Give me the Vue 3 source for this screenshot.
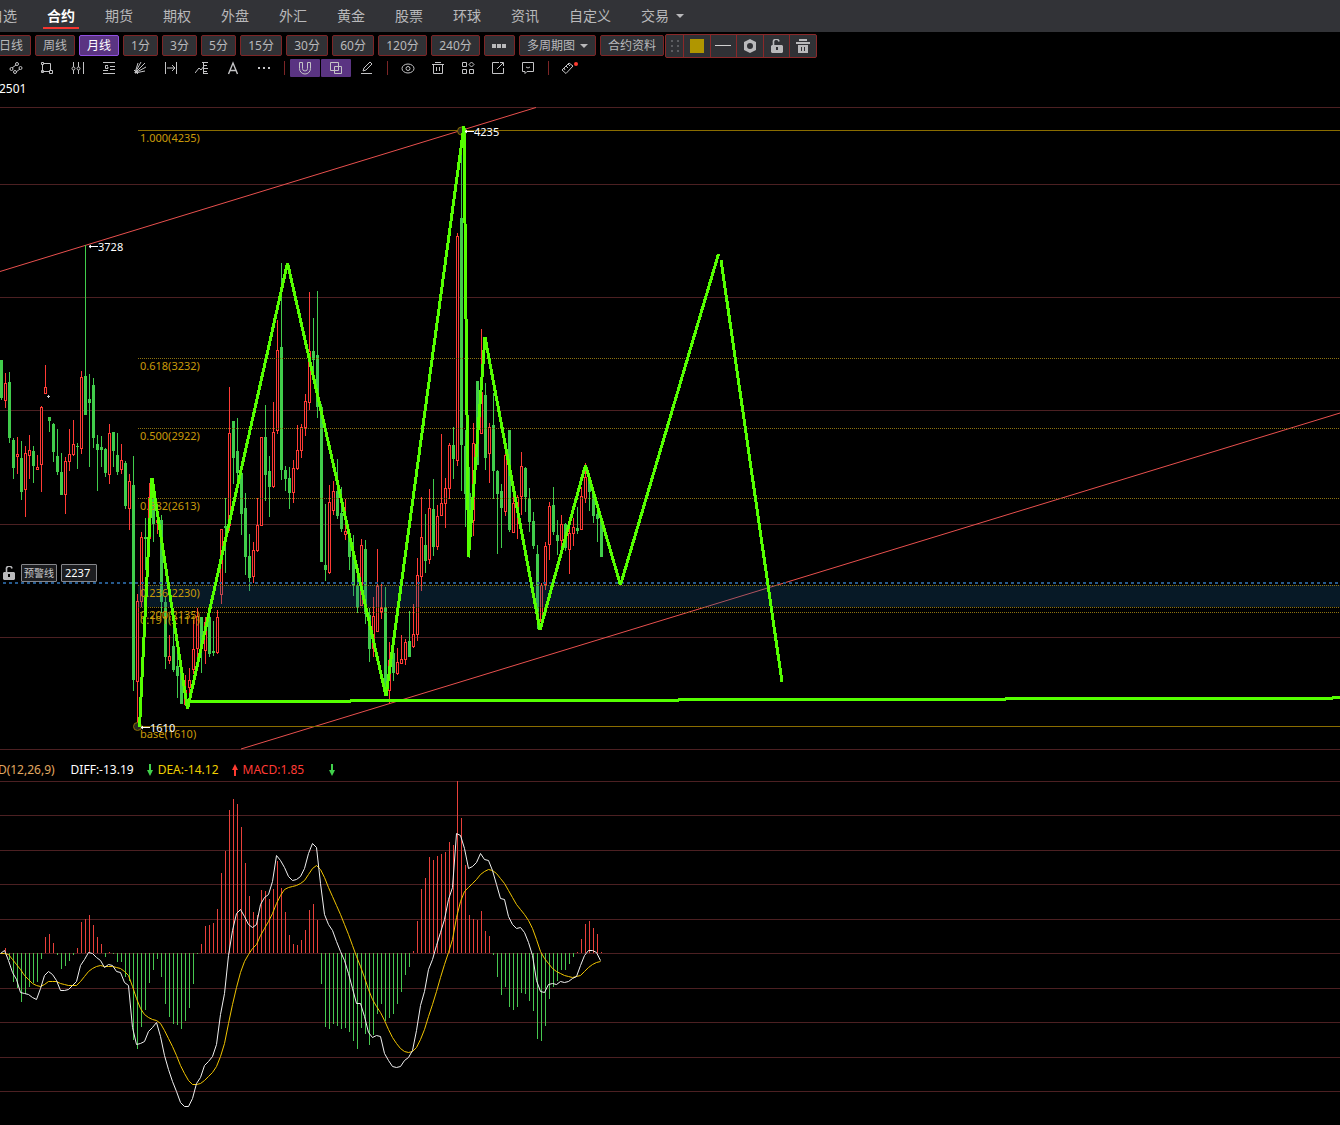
<script setup>
import { ref } from 'vue'

const menus = ['自选', '合约', '期货', '期权', '外盘', '外汇', '黄金', '股票', '环球', '资讯', '自定义']
const periods = ['日线', '周线', '月线', '1分', '3分', '5分', '15分', '30分', '60分', '120分', '240分']
const activePeriod = ref('月线')
const alertPrice = ref('2237')

// 每根K线间隔4px
const STEP = 4

// [类型, 最高, 实体上沿, 实体下沿, 最低]
const candles = [
  ['g', 360, 360, 398, 400], ['r', 373, 383, 401, 408], ['g', 372, 382, 438, 443], ['g', 438, 440, 468, 479],
  ['r', 437, 454, 457, 474], ['g', 441, 458, 492, 500], ['r', 446, 453, 490, 517], ['r', 435, 450, 456, 479],
  ['g', 446, 451, 466, 483], ['r', 455, 467, 470, 470], ['r', 406, 407, 465, 492], ['r', 365, 387, 394, 394],
  ['g', 417, 417, 421, 432], ['g', 423, 424, 452, 462], ['g', 429, 456, 472, 475], ['g', 453, 472, 495, 495],
  ['r', 457, 461, 495, 514], ['r', 429, 454, 462, 471], ['r', 420, 444, 455, 456], ['g', 443, 446, 447, 469],
  ['r', 371, 377, 449, 454], ['g', 245, 376, 415, 415], ['g', 374, 399, 403, 467], ['g', 378, 385, 438, 448],
  ['g', 435, 444, 450, 491], ['g', 436, 447, 450, 467], ['g', 448, 449, 473, 477], ['r', 424, 433, 475, 484],
  ['g', 432, 432, 451, 467], ['g', 433, 455, 472, 475], ['r', 444, 460, 470, 474], ['g', 461, 463, 506, 509],
  ['r', 474, 481, 509, 530], ['g', 456, 485, 680, 691], ['r', 594, 601, 682, 727], ['r', 532, 537, 602, 607],
  ['g', 518, 537, 539, 570], ['r', 483, 497, 539, 541], ['g', 483, 485, 524, 542], ['r', 510, 520, 523, 534],
  ['g', 515, 520, 602, 613], ['g', 597, 602, 657, 669], ['r', 635, 656, 661, 664], ['g', 620, 646, 670, 672],
  ['g', 653, 666, 676, 698], ['g', 660, 668, 704, 704], ['r', 675, 690, 705, 705], ['r', 668, 680, 688, 694],
  ['r', 620, 649, 670, 674], ['r', 608, 616, 649, 658], ['g', 617, 617, 648, 673], ['r', 617, 622, 651, 664],
  ['g', 617, 617, 654, 657], ['g', 621, 651, 653, 656], ['r', 610, 617, 653, 654], ['r', 529, 529, 595, 604],
  ['g', 498, 526, 528, 573], ['r', 387, 433, 526, 531], ['g', 421, 421, 458, 484], ['g', 418, 451, 473, 480],
  ['g', 467, 473, 514, 535], ['g', 493, 508, 557, 575], ['g', 534, 556, 578, 591], ['r', 542, 550, 577, 583],
  ['r', 498, 525, 551, 552], ['r', 437, 437, 526, 526], ['g', 405, 437, 475, 501], ['g', 456, 471, 487, 517],
  ['r', 402, 432, 487, 488], ['r', 320, 350, 431, 434], ['g', 263, 347, 470, 480], ['g', 466, 470, 479, 491],
  ['g', 467, 478, 493, 509], ['r', 460, 468, 493, 503], ['r', 425, 450, 469, 470], ['r', 424, 427, 451, 458],
  ['r', 394, 401, 428, 436], ['r', 292, 351, 403, 410], ['g', 318, 351, 360, 377], ['g', 291, 355, 407, 418],
  ['g', 404, 407, 562, 562], ['g', 504, 565, 570, 581], ['r', 485, 502, 573, 574], ['r', 481, 491, 511, 515],
  ['g', 459, 491, 516, 519], ['g', 487, 513, 529, 532], ['r', 499, 531, 535, 540], ['g', 532, 537, 557, 570],
  ['g', 535, 553, 585, 596], ['g', 575, 585, 607, 613], ['r', 539, 545, 606, 606], ['g', 540, 549, 614, 624],
  ['g', 608, 615, 649, 662], ['r', 597, 616, 649, 657], ['r', 549, 586, 632, 632], ['r', 583, 608, 612, 619],
  ['g', 587, 608, 690, 696], ['r', 642, 660, 691, 704], ['g', 650, 653, 673, 681], ['r', 648, 662, 674, 675],
  ['r', 635, 659, 664, 664], ['r', 639, 642, 660, 665], ['g', 611, 641, 657, 657], ['r', 604, 634, 647, 648],
  ['r', 558, 575, 635, 641], ['r', 497, 537, 577, 591], ['g', 514, 545, 561, 573], ['r', 489, 508, 560, 564],
  ['g', 479, 509, 547, 556], ['r', 505, 516, 547, 550], ['r', 434, 503, 516, 516], ['r', 478, 488, 504, 528],
  ['r', 443, 445, 489, 499], ['g', 427, 445, 459, 479], ['r', 233, 236, 461, 466], ['g', 130, 218, 445, 491],
  ['g', 430, 446, 494, 527], ['g', 467, 493, 513, 558], ['r', 423, 443, 521, 536], ['g', 381, 381, 465, 465],
  ['r', 329, 392, 434, 434], ['g', 383, 395, 458, 470], ['r', 423, 427, 454, 483], ['g', 393, 425, 471, 499],
  ['g', 470, 471, 494, 554], ['g', 484, 491, 508, 548], ['r', 452, 455, 512, 516], ['g', 430, 430, 530, 532],
  ['r', 497, 503, 533, 533], ['r', 495, 497, 513, 539], ['r', 452, 466, 497, 515], ['g', 467, 468, 497, 512],
  ['g', 488, 498, 522, 532], ['g', 512, 521, 546, 549], ['g', 545, 554, 620, 629], ['r', 583, 585, 622, 624],
  ['r', 542, 546, 585, 590], ['r', 502, 506, 545, 560], ['g', 487, 505, 532, 535], ['g', 520, 535, 541, 555],
  ['r', 515, 524, 541, 547], ['g', 523, 524, 548, 551], ['r', 517, 533, 550, 574], ['r', 518, 527, 534, 546],
  ['g', 507, 528, 531, 534], ['r', 487, 496, 530, 530], ['r', 463, 477, 499, 503], ['g', 476, 478, 492, 511],
  ['g', 487, 491, 516, 523], ['g', 510, 514, 519, 542], ['g', 518, 520, 557, 557]
]

// 柱状图端点
const ZERO = 953
const bars = [
  953, 948, 960, 982, 988, 1002, 994, 987, 983, 982, 959, 937, 934, 943, 955, 969, 966, 961, 955, 948,
  922, 919, 915, 925, 937, 944, 957, 952, 954, 962, 962, 977, 981, 1040, 1049, 1027, 1010, 983, 970, 959,
  977, 1004, 1017, 1024, 1025, 1029, 1021, 1008, 984, 954, 944, 926, 925, 923, 909, 873, 851, 810, 799, 804,
  827, 863, 896, 912, 915, 890, 891, 899, 889, 861, 888, 912, 935, 944, 945, 940, 930, 910, 904, 920,
  984, 1027, 1029, 1024, 1026, 1029, 1028, 1032, 1041, 1049, 1028, 1034, 1045, 1035, 1014, 1004, 1021, 1018, 1014, 1004,
  992, 975, 967, 951, 921, 889, 878, 857, 860, 856, 854, 852, 842, 845, 781, 818, 865, 915, 919, 920,
  911, 931, 936, 955, 977, 995, 987, 1007, 1010, 1007, 993, 994, 1001, 1011, 1039, 1041, 1026, 999, 987, 981,
  970, 970, 964, 957, 952, 939, 924, 921, 928, 934, 952
]
const diff = [
  953, 950, 960, 972, 979, 992, 993, 994, 997, 999, 988, 975, 971, 974, 980, 990, 990, 989, 985, 981,
  965, 959, 952, 953, 957, 960, 967, 964, 965, 971, 972, 982, 985, 1027, 1044, 1043, 1041, 1031, 1027, 1022,
  1036, 1055, 1069, 1081, 1091, 1102, 1106, 1106, 1098, 1083, 1077, 1065, 1061, 1056, 1044, 1014, 993, 955, 930, 913,
  909, 916, 924, 927, 924, 904, 897, 894, 881, 855, 860, 867, 876, 880, 879, 876, 868, 853, 843, 847,
  883, 914, 924, 930, 941, 951, 960, 973, 988, 1003, 1003, 1016, 1032, 1037, 1035, 1036, 1053, 1060, 1066, 1067,
  1066, 1060, 1057, 1050, 1030, 1005, 991, 969, 959, 945, 932, 919, 899, 887, 833, 835, 848, 868, 866, 862,
  853, 859, 860, 870, 884, 898, 899, 916, 924, 928, 927, 932, 942, 955, 980, 991, 992, 984, 983, 984,
  981, 982, 981, 978, 976, 965, 955, 950, 950, 952, 960
]
const dea = [
  953, 953, 954, 959, 964, 969, 975, 979, 983, 985, 986, 984, 981, 981, 981, 983, 984, 985, 985, 985,
  981, 976, 971, 968, 966, 965, 966, 966, 966, 967, 968, 971, 975, 986, 998, 1008, 1014, 1017, 1019, 1020,
  1023, 1030, 1038, 1046, 1055, 1065, 1073, 1080, 1084, 1084, 1083, 1080, 1076, 1072, 1066, 1056, 1043, 1023, 1004, 987,
  972, 961, 954, 948, 944, 935, 928, 921, 913, 903, 895, 889, 887, 886, 885, 883, 880, 874, 868, 865,
  869, 877, 887, 896, 905, 914, 924, 934, 945, 956, 966, 977, 989, 999, 1006, 1012, 1020, 1029, 1037, 1043,
  1048, 1051, 1052, 1051, 1047, 1039, 1029, 1016, 1004, 991, 977, 964, 952, 939, 917, 901, 891, 887, 883, 879,
  874, 871, 869, 870, 873, 878, 883, 890, 897, 904, 909, 914, 920, 928, 939, 951, 958, 963, 968, 971,
  973, 975, 976, 977, 976, 975, 971, 967, 964, 962, 961
]
const toPoints = (list) => list.map((y, i) => `${i * STEP + 0.5},${y + 0.5}`).join(' ')

const priceGrid = [107, 184, 297, 410, 524, 637, 749]
const macdGrid = [781, 815, 850, 884, 919, 953, 988, 1022, 1057, 1091]

const fibLines = [358, 428, 498, 585, 607, 612]
const fibLabels = [
  { y: 142, text: '1.000(4235)' },
  { y: 370, text: '0.618(3232)' },
  { y: 440, text: '0.500(2922)' },
  { y: 510, text: '0.382(2613)' },
  { y: 597, text: '0.236(2230)' },
  { y: 619, text: '0.200(2135)' },
  { y: 624, text: '0.191(2111)' },
  { y: 738, text: 'base(1610)' }
]
const marks = [
  { x: 88, y: 247, text: '3728' },
  { x: 464, y: 132, text: '4235' },
  { x: 140, y: 728, text: '1610' }
]
</script>

<template>
  <div class="app">
    <nav class="menu">
      <a
        v-for="item in menus"
        :key="item"
        href="#"
        class="menu-item"
        :class="{ active: item === '合约' }"
      >{{ item }}</a>
      <a href="#" class="menu-item">交易<i class="caret"></i></a>
    </nav>

    <div class="period-bar">
      <button
        v-for="item in periods"
        :key="item"
        class="period"
        :class="[`len-${item.length}`, { active: item === activePeriod }]"
        @click="activePeriod = item"
      >{{ item }}</button>
      <button class="period" aria-label="更多周期">
        <svg width="15" height="4"><path d="M0 0h4v4H0zM5 0h4v4H5zM10 0h4v4h-4z" fill="#b9b9bb" /></svg>
      </button>
      <button class="period">多周期图<i class="caret"></i></button>
      <button class="period">合约资料</button>
      <div class="float-bar">
        <span class="handle"><svg width="10" height="14"><path d="M1 1h2v2H1zM7 1h2v2H7zM1 6h2v2H1zM7 6h2v2H7zM1 11h2v2H1zM7 11h2v2H7z" fill="#5c5d61" /></svg></span>
        <button class="cell" aria-label="颜色"><i class="swatch"></i></button>
        <button class="cell" aria-label="线型"><i class="dash"></i></button>
        <button class="cell" aria-label="设置">
          <svg width="14" height="14"><path fill-rule="evenodd" d="M7 0l6 3v8l-6 3-6-3V3zM7 4a3 3 0 1 0 0 6 3 3 0 0 0 0-6z" fill="#b9b9bb" /></svg>
        </button>
        <button class="cell" aria-label="锁定">
          <svg width="14" height="14"><path d="M3.5 7V3.500a2.500 2.500 0 0 1 5.500-1" fill="none" stroke="#b9b9bb" stroke-width="1.600" /><path fill-rule="evenodd" d="M2 6h10l1 1v6l-1 1H2l-1-1V7zM6 8v3h2V8z" fill="#b9b9bb" /></svg>
        </button>
        <button class="cell" aria-label="删除">
          <svg width="14" height="14"><path fill-rule="evenodd" d="M3 0h8v2H3zM0 3h14v2H0zM2 6h10v8H2zM5 8v4h1V8zM8 8v4h1V8z" fill="#b9b9bb" /></svg>
        </button>
      </div>
    </div>

    <div class="tool-bar">
      <div class="tools">
        <button class="tool" aria-label="线段">
          <svg width="14" height="14"><path d="M3 7l4-3M7 11l4-3" /><circle cx="2.500" cy="8" r="1.500" /><circle cx="8" cy="3" r="1.500" /><circle cx="6" cy="11" r="1.500" /><circle cx="11.500" cy="7" r="1.500" /></svg>
        </button>
        <button class="tool" aria-label="矩形">
          <svg width="14" height="14"><path d="M4 2.500h6.500V9M2.500 4v6.500H9" /><path d="M1.500 1.500h2v2h-2zM1.500 9.500h2v2h-2zM9.500 9.500h3v3h-3z" /></svg>
        </button>
        <button class="tool" aria-label="周期线">
          <svg width="14" height="14"><path d="M2.500 1v5M2.500 9v4M7.500 1v5M7.500 9v4M12.500 1v12" /><circle cx="2.500" cy="7.500" r="1.500" /><circle cx="7.500" cy="7.500" r="1.500" /></svg>
        </button>
        <button class="tool" aria-label="黄金分割">
          <svg width="14" height="14"><path d="M1 1.500h12M8 5.500h5M8 8.500h5M1 12.500h12M1 9.500h5M6 4.500H3.500v3H6V6H5" /></svg>
        </button>
        <button class="tool" aria-label="扇形线">
          <svg width="14" height="14"><path d="M2 12L5 2M2 12L8 1M2 12l10-10M2 12l11-6M2 12l10-2M1 9l4 4" /></svg>
        </button>
        <button class="tool" aria-label="测量">
          <svg width="14" height="14"><path d="M1.500 1v12M12.500 1v12M3 7h8M8 4l3 3-3 3" /></svg>
        </button>
        <button class="tool" aria-label="波浪">
          <svg width="14" height="14"><path d="M0 12l4-5 2 2 3-4M8.500 1v12M7 1.500h6M9 4.500h3M9 7.500h4M9 10.500h3M8 12.500h5" /></svg>
        </button>
        <button class="tool" aria-label="文字">
          <svg width="14" height="14"><path d="M2.500 13L7 2l4.500 11M4 9.500h6" stroke-width="1.400" /></svg>
        </button>
        <button class="tool" aria-label="更多">
          <svg width="14" height="14"><path d="M1 6h2v2H1zM6 6h2v2H6zM11 6h2v2h-2z" class="solid" /></svg>
        </button>
      </div>
      <i class="sep"></i>
      <div class="tools">
        <button class="tool on" aria-label="磁吸">
          <svg width="14" height="14"><path d="M1.500 1.500h3v6a2.500 2.500 0 0 0 5 0v-6h3v6a5.500 5.500 0 0 1-11 0z" /></svg>
        </button>
        <button class="tool on" aria-label="连续绘制">
          <svg width="14" height="14"><path d="M1.500 1.500h8v8h-8zM5.500 5.500h7v7h-7z" /></svg>
        </button>
        <button class="tool" aria-label="画笔">
          <svg width="14" height="14"><path d="M3 10l1-3 6-6 2 2-6 6zM1 12.500h11" /></svg>
        </button>
      </div>
      <i class="sep"></i>
      <div class="tools tight">
        <button class="tool" aria-label="显示">
          <svg width="14" height="14"><ellipse cx="7" cy="7.500" rx="6" ry="4.500" /><circle cx="7" cy="7.500" r="2" /></svg>
        </button>
        <button class="tool" aria-label="清空">
          <svg width="14" height="14"><path d="M4 1.500h6M1 3.500h12M2.500 4v8.500h9V4M5.500 6v4M8.500 6v4" /></svg>
        </button>
        <button class="tool" aria-label="图形库">
          <svg width="14" height="14"><path d="M1.500 1.500h4v4h-4zM1.500 8.500h4v4h-4zM8.500 8.500h4v4h-4zM10.500 1l2.500 2.500L10.500 6 8 3.500z" /></svg>
        </button>
        <button class="tool" aria-label="导出">
          <svg width="14" height="14"><path d="M8 1.500H1.500v11h11V7M6 8l6-6M9 1.500h3.500V5" /></svg>
        </button>
        <button class="tool" aria-label="备注">
          <svg width="14" height="14"><path d="M1.500 1.500h11v9H6l-2 2v-2H1.500zM5 6l2 1 2-1" /></svg>
        </button>
      </div>
      <i class="sep"></i>
      <button class="tool" aria-label="标尺">
        <svg width="18" height="14"><path d="M2 9l7-7 4 3-7 7.500zM4 7l1 2M6 5l2 2M8 3l2 2" /><circle cx="16" cy="3" r="2" class="dot" /></svg>
      </button>
    </div>

    <div class="symbol">2501</div>

    <main class="chart">
      <svg class="price" width="100%" height="643">
        <g transform="translate(0 -107)">
          <rect v-for="y in priceGrid" :key="y" x="0" :y="y" width="100%" height="1" class="grid" />
          <path d="M0 271.500L536 107.500M241 749L1340 413L1900 242" class="trend" />

          <g v-for="(c, i) in candles" :key="i" :class="c[0] === 'r' ? 'up' : 'down'">
            <rect :x="i * STEP + 1" :y="c[1]" width="1" :height="c[4] - c[1]" class="wick" />
            <rect
              v-if="c[0] === 'r'"
              :x="i * STEP + 0.5"
              :y="c[2] + 0.5"
              width="2"
              :height="Math.max(c[3] - c[2] - 1, 1)"
              class="hollow"
            />
            <rect v-else :x="i * STEP" :y="c[2]" width="3" :height="c[3] - c[2]" class="wick" />
          </g>
          <path d="M48 395h1v1h1v1h-1v1h-1v-1h-1v-1h1z" fill="#ccc" />

          <svg x="138" y="0" width="100%" height="760">
            <rect y="585" width="100%" height="22" class="band" />
            <line v-for="y in fibLines" :key="y" x1="0" x2="100%" :y1="y + 0.5" :y2="y + 0.5" class="fib" />
            <rect y="130" width="100%" height="1" class="fib-solid" />
            <rect y="726" width="100%" height="1" class="fib-solid" />
          </svg>
          <line x1="3" x2="100%" y1="583" y2="583" class="alert-line" />
          <circle cx="461.500" cy="131" r="4" class="anchor" />
          <circle cx="137.500" cy="726.500" r="4" class="anchor" />
          <text v-for="f in fibLabels" :key="f.text" x="140" :y="f.y" class="fib-text">{{ f.text }}</text>

          <path d="M139.500 727L152 478L187.500 709L287.500 263L386 696L464 126L468.500 557L485 337L540 630L585.500 465L620.500 585L718.500 254M721 260L782 682" class="pen" />
          <path d="M187 701.500H350V700.500H678V699.500H1005V698.500H1332V697.500H1900" class="pen" />

          <g v-for="m in marks" :key="m.text">
            <path :d="`M${m.x + 10} ${m.y - 0.5}h-9m2 -1.500l-2 1.500l2 1.500`" class="mark-line" />
            <text :x="m.x + 10" :y="m.y + 4" class="mark-text">{{ m.text }}</text>
          </g>
        </g>
      </svg>

      <div class="alert">
        <svg width="14" height="14"><path d="M3.500 7V3.500a2.500 2.500 0 0 1 5.500-1" fill="none" stroke="#b9b9bb" stroke-width="1.600" /><path fill-rule="evenodd" d="M1 6h10l1 1v6l-1 1H1l-1-1V7zM5 8v3h2V8z" fill="#b9b9bb" /></svg>
        <label for="alert-price" class="alert-box">预警线</label>
        <input id="alert-price" v-model="alertPrice" class="alert-box alert-input" />
      </div>
    </main>

    <div class="legend">
      <span class="name">MACD(12,26,9)</span>
      <span class="diff">DIFF:-13.19</span>
      <svg class="arrow" width="6" height="12"><path d="M2 0h2v6h2L3 12 0 6h2z" fill="#41d14b" /></svg>
      <span class="dea">DEA:-14.12</span>
      <svg class="arrow" width="6" height="12"><path d="M2 12h2V6h2L3 0 0 6h2z" fill="#ff3b30" /></svg>
      <span class="macd">MACD:1.85</span>
      <svg class="arrow last" width="6" height="12"><path d="M2 0h2v6h2L3 12 0 6h2z" fill="#41d14b" /></svg>
    </div>

    <svg class="indicator" width="100%" height="344">
      <g transform="translate(0 -781)">
        <rect v-for="y in macdGrid" :key="y" x="0" :y="y" width="100%" height="1" class="grid" />
        <rect
          v-for="(y, i) in bars"
          :key="i"
          :x="i * STEP + 1"
          :y="Math.min(y, ZERO)"
          width="1"
          :height="Math.abs(y - ZERO)"
          :fill="y < ZERO ? '#e8403a' : '#47c850'"
        />
        <polyline :points="toPoints(dea)" class="line dea-line" />
        <polyline :points="toPoints(diff)" class="line diff-line" />
      </g>
    </svg>
  </div>
</template>

<style>
body {
  background: #000;
}
</style>

<style scoped>
.app {
  background: #000;
  color: #b9b9bb;
  font-family: "Noto Sans", "Noto Sans CJK SC", sans-serif;
  font-size: 12px;
  overflow: hidden;
}
svg {
  display: block;
}
button {
  margin: 0;
  padding: 0;
  border: none;
  background: none;
  color: inherit;
  font: inherit;
}
.menu {
  display: flex;
  gap: 30px;
  height: 32px;
  margin-left: -11px;
  background: #323337;
}
.menu-item {
  position: relative;
  display: flex;
  align-items: center;
  flex: none;
  color: #b9b9bb;
  font-size: 14px;
  line-height: 34px;
  text-decoration: none;
}
.menu-item.active {
  color: #fff;
  font-weight: bold;
}
.menu-item.active::after {
  content: '';
  position: absolute;
  left: -4px;
  right: -4px;
  bottom: 3px;
  height: 2px;
  background: #f5352f;
}
.caret {
  border: 4px solid transparent;
  border-top-color: #b9b9bb;
  border-bottom: none;
  margin-left: 7px;
}
.period-bar {
  display: flex;
  align-items: center;
  gap: 4px;
  height: 27px;
  margin-left: -9px;
}
.period {
  display: flex;
  align-items: center;
  justify-content: center;
  flex: none;
  box-sizing: border-box;
  min-width: 35px;
  height: 21px;
  padding: 0 7px;
  border: 1px solid #7c2526;
  border-radius: 2px;
  background: #303135;
  line-height: 19px;
  white-space: nowrap;
}
.period.len-3 {
  width: 42px;
}
.period.len-4 {
  width: 49px;
}
.period:not(.len-2):not(.len-3):not(.len-4) {
  min-width: 31px;
}
.period.active {
  border-color: #9250e0;
  background: #5a3482;
  color: #fff;
}
.period .caret {
  margin-left: 5px;
}
.float-bar {
  display: flex;
  flex: none;
  box-sizing: border-box;
  width: 152px;
  height: 24px;
  margin-left: -3px;
  border: 1px solid #8a2829;
  border-radius: 2px;
  background: #303135;
}
.handle,
.cell {
  display: flex;
  align-items: center;
  justify-content: center;
}
.handle {
  width: 17px;
}
.cell {
  flex: 1;
  border-left: 1px solid #8a2829;
}
.swatch {
  width: 14px;
  height: 14px;
  background: #b09600;
}
.dash {
  width: 16px;
  height: 1px;
  background: #d0d0d0;
}
.tool-bar {
  display: flex;
  gap: 1px;
  height: 18px;
  padding-left: 1px;
}
.tools {
  display: flex;
  gap: 1px;
}
.tools.tight {
  gap: 0;
}
.tool {
  display: flex;
  align-items: center;
  justify-content: center;
  width: 30px;
  height: 18px;
  border-radius: 1px;
}
.tool.on {
  background: #5a3482;
}
.tool svg {
  fill: none;
  stroke: #c4c4c6;
  stroke-width: 1;
}
.tool .solid {
  fill: #c4c4c6;
  stroke: none;
}
.tool .dot {
  fill: #ff3b30;
  stroke: none;
}
.sep {
  width: 1px;
  height: 14px;
  margin: 2px 4px;
  background: #7c2526;
}
.symbol {
  height: 30px;
  margin-left: -1px;
  color: #fff;
  line-height: 24px;
}
.chart {
  position: relative;
}
.grid {
  fill: #4c2022;
}
.trend {
  fill: none;
  stroke: #e8504e;
  stroke-width: 1;
}
.wick {
  shape-rendering: crispEdges;
}
.up .wick {
  fill: #ff3b35;
}
.down .wick {
  fill: #41cc4b;
}
.hollow {
  fill: #000;
  stroke: #ff3b35;
  stroke-width: 1;
  shape-rendering: crispEdges;
}
.band {
  fill: rgba(25, 90, 135, 0.28);
}
.fib {
  stroke: #8c7210;
  stroke-width: 1;
  stroke-dasharray: 1 1;
}
.fib-solid {
  fill: #8a6d00;
}
.alert-line {
  stroke: #265a8e;
  stroke-width: 2;
  stroke-dasharray: 3 3;
}
.anchor {
  fill: #2a2a20;
  stroke: #8a6d00;
  stroke-width: 1;
}
.fib-text {
  fill: #c99a0a;
  font-size: 11px;
}
.pen {
  fill: none;
  stroke: #55ff00;
  stroke-width: 3;
  stroke-linejoin: bevel;
  shape-rendering: crispEdges;
}
.mark-line {
  fill: none;
  stroke: #fff;
  stroke-width: 1;
}
.mark-text {
  fill: #fff;
  font-size: 11px;
}
.alert {
  position: absolute;
  top: 457px;
  left: 3px;
  display: flex;
  align-items: center;
  gap: 4px;
}
.alert-box {
  box-sizing: border-box;
  width: 36px;
  height: 18px;
  border: 1px solid #85868a;
  border-radius: 1px;
  background: #1c1d20;
  color: #c9c9cb;
  font-family: inherit;
  font-size: 10px;
  line-height: 16px;
  text-align: center;
  white-space: nowrap;
}
.alert-input {
  padding: 0 3px 1px;
  color: #fff;
  font-size: 11px;
  text-align: left;
}
.legend {
  display: flex;
  align-items: center;
  height: 31px;
  margin-left: -28px;
  padding-top: 8px;
  box-sizing: border-box;
  white-space: nowrap;
}
.name {
  margin-right: 16px;
  color: #e0a860;
}
.diff {
  color: #fff;
}
.dea {
  color: #f0d000;
}
.macd {
  color: #ff3b35;
}
.arrow {
  margin: 0 5px 0 13px;
}
.arrow.last {
  margin-left: 25px;
}
.line {
  fill: none;
  stroke-width: 1;
}
.dea-line {
  stroke: #f0c400;
}
.diff-line {
  stroke: #f0f0f0;
}
</style>
